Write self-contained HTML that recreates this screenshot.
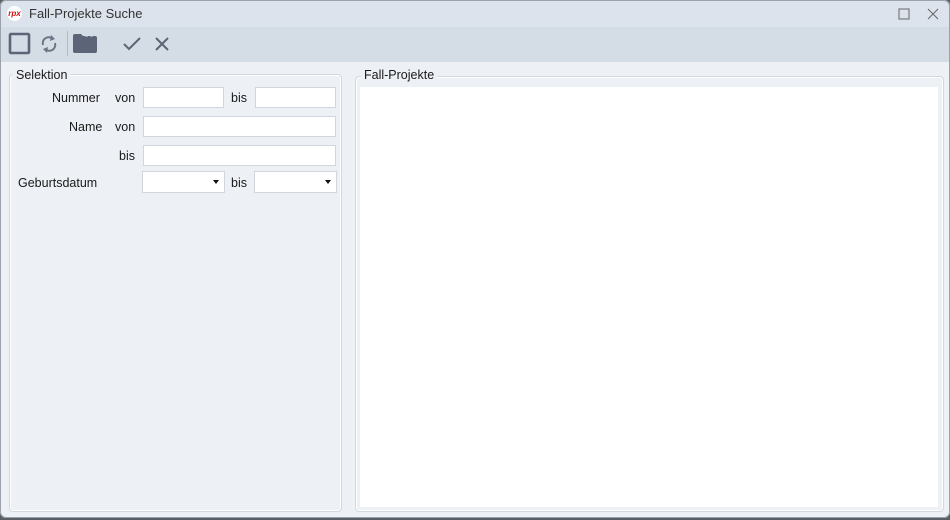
<!DOCTYPE html>
<html><head><meta charset="utf-8"><style>
*{box-sizing:border-box;margin:0;padding:0}
body{width:950px;height:520px;background:#5a5f66;font-family:"Liberation Sans",sans-serif;font-size:13px;color:#1a1a1a;position:relative;overflow:hidden}
.win{position:absolute;left:0;top:0;width:950px;height:518px;background:#edf0f5;border-radius:6px;overflow:hidden}
.edge{position:absolute;left:0;top:0;width:950px;height:518px;border:1px solid #9aa1ab;border-radius:6px;pointer-events:none}
.title{position:absolute;left:0;top:0;width:100%;height:27px;background:#dce3ec}
.title .t{position:absolute;left:29px;top:6px;font-size:13px;color:#333}
.logo{position:absolute;left:7px;top:6px;width:15px;height:15px;border-radius:50%;background:#fff;color:#d01010;font-size:8px;font-weight:bold;font-style:italic;text-align:center;line-height:15px}
.tb{position:absolute;left:0;top:27px;width:100%;height:35px;background:#d4dce5}
.a{position:absolute}
.fs{position:absolute;border:1px solid #d2d8e0;border-radius:4px;box-shadow:inset 0 0 0 1px #fff}
.lg{position:absolute;background:#edf0f5;padding:0 3px;font-size:12.5px}
.lb{position:absolute;font-size:12.5px}
.in{position:absolute;height:21px;background:#fff;border:1px solid #d0d6de}
.dd:after{content:"";position:absolute;right:5px;top:8px;border-left:3.5px solid transparent;border-right:3.5px solid transparent;border-top:4px solid #111}
</style></head><body>
<div class="win">
<div class="title"><div class="logo">rpx</div><div class="t">Fall-Projekte Suche</div>
<svg class="a" style="left:898px;top:8px" width="12" height="12"><rect x="1" y="1" width="10" height="10" fill="none" stroke="#666" stroke-width="1"/></svg>
<svg class="a" style="left:927px;top:8px" width="12" height="12"><path d="M1 1L11 11M11 1L1 11" stroke="#666" stroke-width="1"/></svg>
</div>
<div class="tb">
<svg class="a" style="left:8px;top:5px" width="24" height="24"><rect x="2" y="2" width="19" height="19" rx="1" fill="none" stroke="#5b6577" stroke-width="2.6"/></svg>
<svg class="a" style="left:39px;top:6px" width="20" height="22" viewBox="0 0 20 22"><path d="M4 12A6 6 0 0 1 14 6" fill="none" stroke="#6b7585" stroke-width="2"/><path d="M12 2L16 6L11 8Z" fill="#6b7585"/><path d="M16 10A6 6 0 0 1 6 16" fill="none" stroke="#6b7585" stroke-width="2"/><path d="M8 20L4 16L9 14Z" fill="#6b7585"/></svg>
<div class="a" style="left:67px;top:4px;width:1px;height:25px;background:#b0b8c3"></div>
<svg class="a" style="left:73px;top:7px" width="24" height="19"><path d="M0 2Q0 0 2 0H8L10 2H22Q24 2 24 4V17Q24 19 22 19H2Q0 19 0 17Z" fill="#5b6577"/><rect x="12" y="1.5" width="3" height="1" fill="#d4dce5"/><rect x="17" y="1.5" width="3" height="1" fill="#d4dce5"/></svg>
<svg class="a" style="left:123px;top:10px" width="18" height="14"><path d="M1 7L6 12L17 1" fill="none" stroke="#5b6577" stroke-width="2"/></svg>
<svg class="a" style="left:154px;top:9px" width="16" height="16"><path d="M2 2L14 14M14 2L2 14" stroke="#5b6577" stroke-width="2"/></svg>
</div>
<div class="fs" style="left:9px;top:74px;width:333px;height:438px"></div>
<div class="lg" style="left:13px;top:68px">Selektion</div>
<div class="lb" style="left:52px;top:91px">Nummer</div>
<div class="lb" style="left:115px;top:91px">von</div>
<div class="in" style="left:143px;top:87px;width:81px"></div>
<div class="lb" style="left:231px;top:91px">bis</div>
<div class="in" style="left:255px;top:87px;width:81px"></div>
<div class="lb" style="left:69px;top:120px">Name</div>
<div class="lb" style="left:115px;top:120px">von</div>
<div class="in" style="left:143px;top:116px;width:193px"></div>
<div class="lb" style="left:119px;top:149px">bis</div>
<div class="in" style="left:143px;top:145px;width:193px"></div>
<div class="lb" style="left:18px;top:176px">Geburtsdatum</div>
<div class="in dd" style="left:142px;top:171px;width:83px;height:22px"></div>
<div class="lb" style="left:231px;top:176px">bis</div>
<div class="in dd" style="left:254px;top:171px;width:83px;height:22px"></div>
<div class="fs" style="left:355px;top:76px;width:589px;height:436px"></div>
<div class="lg" style="left:361px;top:68px">Fall-Projekte</div>
<div class="a" style="left:360px;top:87px;width:578px;height:420px;background:#fff"></div>
<div class="edge"></div>
</div>
</body></html>
